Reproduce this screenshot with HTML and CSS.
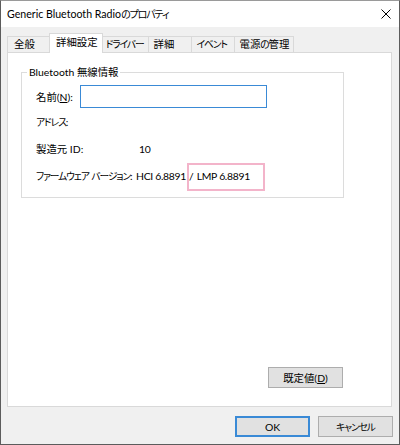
FILE: index.html
```html
<!DOCTYPE html>
<html lang="ja">
<head>
<meta charset="utf-8">
<link rel="stylesheet" href="styles.css">
</head>
<body>
<div class="window">
  <div class="titlebar">
    <span class="title">Generic Bluetooth Radio<span class="k">のプロパティ</span></span>
    <svg class="close" width="10" height="10" viewBox="0 0 10 10"><path d="M0.5 0.5 L9.5 9.5 M9.5 0.5 L0.5 9.5" stroke="#000" stroke-width="1" fill="none"/></svg>
  </div>
  <div class="body">
    <div class="tabs">
      <div class="tab">全般</div>
      <div class="tab active">詳細設定</div>
      <div class="tab"><span class="k">ドライバー</span></div>
      <div class="tab">詳細</div>
      <div class="tab"><span class="k">イベント</span></div>
      <div class="tab">電源<span class="k">の</span>管理</div>
    </div>
    <div class="panel">
      <fieldset class="group">
        <legend>Bluetooth 無線情報</legend>
        <div class="row row-name"><span class="lbl lbl-name">名前(<u>N</u>):</span><input class="textbox" type="text"></div>
        <div class="row row-addr"><span class="lbl"><span class="k">アドレス</span>:</span></div>
        <div class="row row-mfr"><span class="lbl lbl-mfr">製造元 ID:</span><span class="num">10</span></div>
        <div class="row row-fw"><span class="lbl lbl-fw"><span class="k">ファームウェア</span> <span class="k">バージョン</span>:</span><span class="num">HCI 6.8891</span><span class="slash">/</span><span class="num lmp">LMP 6.8891</span><span class="highlight"></span></div>
      </fieldset>
      <div class="panel-foot"><button class="btn">既定値(<u>D</u>)</button></div>
    </div>
    <div class="buttons"><button class="btn default">OK</button><button class="btn"><span class="k">キャンセル</span></button></div>
  </div>
</div>
</body>
</html>
```
FILE: styles.css
```css
* { box-sizing: border-box; }
html, body { margin: 0; padding: 0; }
body {
  width: 400px; height: 445px; background: #fff;
  font-family: "Lato", "Noto Sans CJK JP", sans-serif;
  font-size: 10.4px; color: #000;
}
.k {
  font-size: 0.94em; letter-spacing: -1.1px;
  font-feature-settings: "palt" 1;
}
.num { letter-spacing: -0.3px; }
.window {
  width: 400px; height: 445px;
  border: 1px solid #5c5c5c; border-top-color: #9a9a9a;
  background: #f0f0f0;
  display: flex; flex-direction: column;
}
.titlebar {
  height: 26px; background: #fff;
  display: flex; align-items: center; justify-content: space-between;
  padding: 0 8px 0 6px;
}
.title { font-size: 10.6px; line-height: 16px; }
.close { display: block; }
.body {
  flex: 1; padding: 6px 7px 0 6px;
  display: flex; flex-direction: column;
}
.tabs { display: flex; align-items: flex-end; height: 19px; }
.tab {
  height: 16px; line-height: 15px; padding: 0 4px 0 5px; min-width: 44px;
  border: 1px solid #d9d9d9; border-bottom: none;
  margin-left: -1px; background: #f0f0f0; white-space: nowrap;
}
.tab:first-child { margin-left: 0; padding-left: 6px; }
.tab.active {
  height: 20px; line-height: 17px; background: #fff;
  margin: 0 -2px -1px -2px; padding: 0 4px 0 6px;
  position: relative; z-index: 1;
}
.panel {
  height: 355px; background: #fff;
  border: 1px solid #d9d9d9;
  display: flex; flex-direction: column;
}
.group {
  margin: 11px 0 0 13px; width: 323px;
  padding: 0 0 13px 0;
  border: 1px solid #dcdcdc;
}
.group legend { margin-left: 5px; padding: 0 2px; line-height: 16px; }
.row {
  display: flex; align-items: center; padding-left: 14px;
  position: relative; line-height: 16px; white-space: nowrap;
}
.row-name { margin-top: 5px; height: 23px; }
.row-addr { margin-top: 6px; }
.row-mfr { margin-top: 11px; }
.row-fw { margin-top: 11px; }
.lbl { flex-shrink: 0; }
.lbl-name { width: 44px; }
.lbl-mfr { width: 103px; }
.lbl-fw { width: 100px; }
.textbox {
  width: 187px; height: 23px; border: 1px solid #3a8ad6;
  padding: 0 3px; font: inherit; outline: none; background: #fff;
}
.slash { margin-left: 3px; }
.lmp { margin-left: 3px; }
.highlight {
  position: absolute; left: 165px; top: -5px; width: 78px; height: 28px;
  border: 2px solid #f3b4ca;
}
.panel-foot {
  margin-top: auto; display: flex; justify-content: flex-end;
  padding: 0 48px 18px 0;
}
.btn {
  width: 75px; height: 21px; padding: 0;
  background: #e1e1e1; border: 1px solid #adadad;
  font: inherit; color: #000;
}
.btn.default { border: 2px solid #3a8ad6; }
.buttons {
  display: flex; justify-content: flex-end; gap: 8px;
  margin-top: 9px; margin-right: -1px;
}
```
